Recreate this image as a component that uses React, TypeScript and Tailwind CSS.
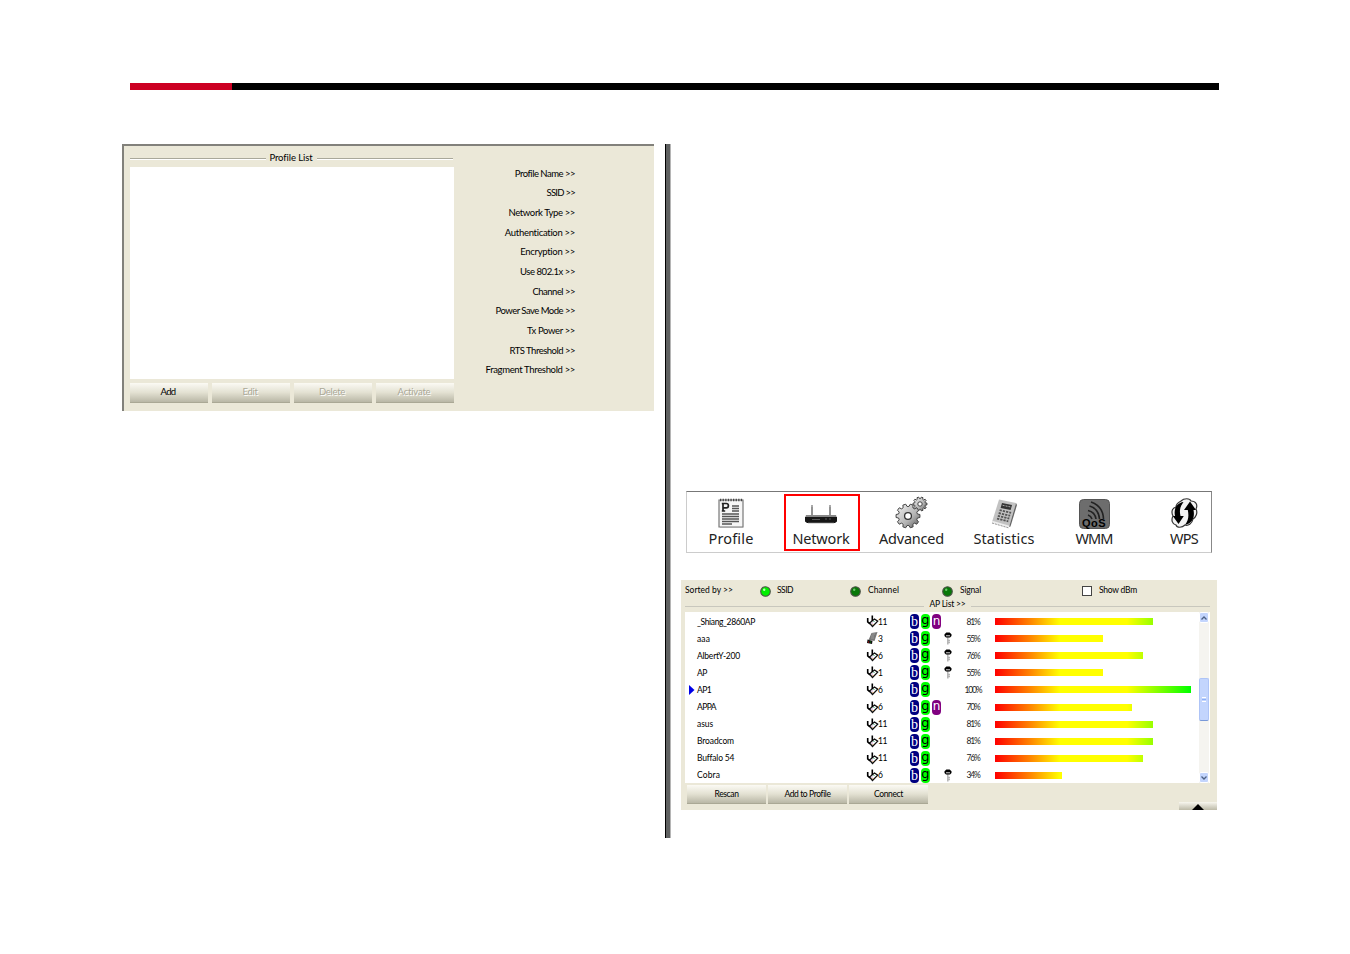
import { useLayoutEffect, useRef } from 'react';
import type { ReactNode } from 'react';

type LabelProps = { text: string; width: number; className?: string };

// Spaces the letters so that the text takes up the given width.
function Label({ text, width, className = '' }: LabelProps) {
  const ref = useRef<HTMLSpanElement>(null);
  useLayoutEffect(() => {
    const el = ref.current;
    if (!el) return;
    el.style.letterSpacing = '0px';
    const natural = el.getBoundingClientRect().width;
    const gap = (width - natural) / text.length;
    el.style.letterSpacing = `${gap}px`;
  }, [text, width]);
  return (
    <span ref={ref} className={`inline-block shrink-0 whitespace-pre ${className}`}>
      {text}
    </span>
  );
}

const fields: [string, number][] = [
  ['Profile Name >>', 60],
  ['SSID >>', 28.5],
  ['Network Type >>', 66.5],
  ['Authentication >>', 70.5],
  ['Encryption >>', 55],
  ['Use 802.1x >>', 55],
  ['Channel >>', 42.5],
  ['Power Save Mode >>', 79.5],
  ['Tx Power >>', 48],
  ['RTS Threshold >>', 65.5],
  ['Fragment Threshold >>', 89.5],
];

type AP = {
  name: string;
  w: number;
  ch: string;
  n?: boolean;
  key?: boolean;
  card?: boolean;
  active?: boolean;
  pct: string;
  bar: number;
};

const aps: AP[] = [
  { name: '_Shiang_2860AP', w: 58, ch: '11', n: true, pct: '81%', bar: 158 },
  { name: 'aaa', w: 13, ch: '3', key: true, card: true, pct: '55%', bar: 107.5 },
  { name: 'AlbertY-200', w: 43, ch: '6', key: true, pct: '76%', bar: 148 },
  { name: 'AP', w: 10, ch: '1', key: true, pct: '55%', bar: 107.5 },
  { name: 'AP1', w: 14, ch: '6', active: true, pct: '100%', bar: 195.5 },
  { name: 'APPA', w: 19, ch: '6', n: true, pct: '70%', bar: 137 },
  { name: 'asus', w: 16, ch: '11', pct: '81%', bar: 158 },
  { name: 'Broadcom', w: 37, ch: '11', pct: '81%', bar: 158 },
  { name: 'Buffalo 54', w: 37, ch: '11', pct: '76%', bar: 148 },
  { name: 'Cobra', w: 23, ch: '6', key: true, pct: '34%', bar: 66.5 },
];

function Button({ text, width, disabled = false, small = false }: { text: string; width: number; disabled?: boolean; small?: boolean }) {
  return (
    <button
      className={`flex items-center justify-center border-b border-[#aaa895] bg-linear-to-b from-[#fbfaf4] via-[#e3e1d2] to-[#b9b7a6] ${small ? 'h-[19px] w-[79px] text-[8.5px]' : 'h-5 w-[78px] pr-[2px] text-[9.5px]'} ${disabled ? 'text-[#aaa897] [text-shadow:1px_1px_0_#ffffff]' : 'text-black'}`}
    >
      <Label text={text} width={width} />
    </button>
  );
}

function Rule({ className = '' }: { className?: string }) {
  return <div className={`h-[2px] border-t border-[#a9a89a] bg-white ${className}`} />;
}

function Antenna({ card }: { card?: boolean }) {
  if (card) {
    return (
      <svg width="13" height="13" viewBox="0 0 13 13">
        <path d="M5.500 1 11.500 0 8.500 9 2.500 8Z" fill="#777" />
        <path d="M6 2h3M5 4h3M5 6h3" stroke="#aaa" strokeWidth=".7" />
        <path d="m1.500 7.500 5 1.500-.5 3-5-1Z" fill="#111" />
        <path d="M2 10h1" stroke="#c00" />
        <path d="M4 10h1" stroke="#080" />
      </svg>
    );
  }
  return (
    <svg width="13" height="13" viewBox="0 0 13 13" fill="none">
      <path d="M3.500 8 8.500 4l3.200 2.200L6.500 11.500Z" fill="#fff" stroke="#111" strokeWidth="1.3" />
      <path d="M1.700 3v3.800l2.300 2M6.300.5v5.500" stroke="#000" strokeWidth="1.6" />
      <path d="M5.500 8h1" stroke="#a5a" />
      <path d="M7.500 6.500h1" stroke="#3a7" />
      <path d="M6.500 9.500h1" stroke="#c84" />
    </svg>
  );
}

function Key() {
  return (
    <svg width="8" height="13" viewBox="0 0 8 13">
      <path d="M3.800 5v7.500M4 8.500h2M4 10.500h2" stroke="#b4b4b4" strokeWidth="1.5" />
      <path d="M2.300.5h3.400L7.500 2.300V4L6 5.500H2L.5 4V2.300Z" fill="#000" />
      <path d="M2 3.800h4" stroke="#ddd" strokeWidth="1" />
    </svg>
  );
}

function Mode({ c, className }: { c: string; className: string }) {
  return (
    <span className={`flex h-[15px] w-[9px] items-center justify-center rounded-[4px] ${className}`}>
      {c}
    </span>
  );
}

function Led({ on = false }: { on?: boolean }) {
  return (
    <svg width="11" height="11" viewBox="0 0 11 11">
      <circle cx="5.5" cy="5.5" r="4.8" fill={on ? '#00f000' : '#087808'} stroke="#4c5148" strokeWidth="1.1" />
      <circle cx="4.2" cy="3.7" r="1.2" fill={on ? '#b8ffb0' : '#6bc46b'} />
    </svg>
  );
}

function ProfileIcon() {
  return (
    <svg width="28" height="31" viewBox="0 0 28 31">
      <path d="M2 2h24v27H2Z" fill="#f6f6f6" stroke="#777" strokeWidth="1.2" />
      <path d="M3 2h23" stroke="#444" strokeWidth="2.4" strokeDasharray="1.3 1.3" />
      <path d="M6 13V5.5h3.2a2.2 2.2 0 0 1 0 4.4H6M4.8 13h3.4M4.8 5.5H7" stroke="#222" strokeWidth="1.7" fill="none" />
      <path d="M15 8h7M15 10.500h7M15 13h7M5 16h17M5 18.500h17M5 21h17M5 23.500h17M5 26h10" stroke="#555" strokeWidth="1.4" />
      <path d="M3 29.5h23" stroke="#aaa" />
    </svg>
  );
}

function RouterIcon() {
  return (
    <svg width="34" height="20" viewBox="0 0 34 20">
      <path d="M8 2v10M26 2v10" stroke="#888" strokeWidth="1.8" />
      <path d="M7 2h2M25 2h2" stroke="#aaa" strokeWidth="2" />
      <path d="M2 11h30l1 3H1Z" fill="#888" />
      <path d="M1 13h32v4.5l-2 1.5H3l-2-1.5Z" fill="#161616" />
      <path d="M8 15.5h8M21 15h2M25 15h2" stroke="#555" />
      <path d="M4 19.2h26" stroke="#bbb" strokeWidth=".8" />
    </svg>
  );
}

function gearPath(cx: number, cy: number, r: number, inner: number, teeth: number) {
  const pts: string[] = [];
  for (let i = 0; i < teeth; i++) {
    [[-0.34, inner], [-0.2, r], [0.2, r], [0.34, inner]].forEach(([o, rad]) => {
      const a = ((i + o) / teeth) * Math.PI * 2;
      pts.push(`${(cx + Math.cos(a) * rad).toFixed(2)} ${(cy + Math.sin(a) * rad).toFixed(2)}`);
    });
  }
  return `M${pts.join('L')}Z`;
}

function GearsIcon() {
  return (
    <svg width="33" height="33" viewBox="0 0 33 33">
      <defs>
        <linearGradient id="metal" x1="0" y1="0" x2="1" y2="1">
          <stop offset="0" stopColor="#f4f4f4" />
          <stop offset=".6" stopColor="#b4b4b4" />
          <stop offset="1" stopColor="#555" />
        </linearGradient>
      </defs>
      <path d={gearPath(25, 8, 7, 5.4, 10)} fill="url(#metal)" stroke="#444" />
      <circle cx="25" cy="8" r="2.2" fill="#fff" stroke="#444" />
      <path d={gearPath(13, 20, 12, 9.6, 10)} fill="url(#metal)" stroke="#444" />
      <circle cx="13" cy="20" r="3.4" fill="#fff" stroke="#333" strokeWidth="1.3" />
    </svg>
  );
}

function CalculatorIcon() {
  return (
    <svg width="28" height="31" viewBox="0 0 28 31">
      <path d="M9 1.5 26 5 19 29 2 24Z" fill="#c2c2c2" />
      <path d="M26 5 19 29l1.5-.5L27 7Z" fill="#666" />
      <path d="m12 5 10 2-1.4 5-10-2Z" fill="#333" />
      <path d="m12.6 7.3 7.8 1.6" stroke="#aaa" strokeDasharray="2 1" />
      <g stroke="#555" strokeWidth="1.8" strokeDasharray="2.3 1">
        <path d="m9.6 12.2 11.5 2.7" />
        <path d="m8.7 15 11.5 2.7" />
        <path d="m7.8 17.8 11.5 2.7" />
        <path d="m7 20.6 11.3 2.7" />
      </g>
      <path d="m2 24 17 5" stroke="#eee" strokeWidth="2.4" />
      <path d="m2 25 17 5" stroke="#999" strokeDasharray="2 1" />
    </svg>
  );
}

function QosIcon() {
  return (
    <span className="relative flex h-[30px] w-[31px]">
      <svg width="31" height="30" viewBox="0 0 31 30" fill="none">
        <rect x=".5" y=".5" width="30" height="29" rx="4" fill="#6d6d6d" stroke="#555" />
        <path d="M9 16q3 1 4 4M9 11.5q7 1.5 8 8.5M10.5 7q9 2.5 10 13M12 3q12 4 12.5 17" stroke="#222" strokeWidth="1.6" />
      </svg>
      <span className="absolute inset-x-0 bottom-0 flex justify-center font-['Liberation_Sans',sans-serif] text-[11px] leading-[11px] font-bold text-black">
        <Label text="QoS" width={24} />
      </span>
    </span>
  );
}

function WpsIcon() {
  return (
    <svg width="29" height="31" viewBox="0 0 29 31" fill="none">
      <path d="M11 3C14 0 20 0 21 3c5 0 7 4 5 8 2 4 0 8-3 10-1 5-5 7-8 6-3 3-8 3-9 0-4-1-5-5-3-9-2-4-1-8 3-9 0-3 3-5 5-6Z" fill="#f3f3f3" stroke="#333" strokeWidth="1.2" />
      <path d="M13.500 4C6.500 5 3.500 11 5 18H2.800l5.700 8 5.300-8h-3.300C9 12 10.500 8 13.500 4Z" fill="#000" />
      <path d="M15 27c7.500-1.500 10-8 8.500-15H26L20 3.500 14 12h3.800C19 18 18.500 22 15 27Z" fill="#000" />
    </svg>
  );
}

function Tool({ icon, text, width, className }: { icon: ReactNode; text: string; width: number; className: string }) {
  return (
    <div className={`flex h-[57px] shrink-0 flex-col items-center ${className}`}>
      <div className="flex h-[35px] items-end justify-center">{icon}</div>
      <div className="flex h-[19px] items-center text-[14.5px] leading-[19px] text-[#222]">
        <Label text={text} width={width} />
      </div>
    </div>
  );
}

function ProfilePanel() {
  return (
    <section className="flex h-[267px] w-[532px] shrink-0 border-t-2 border-l-2 border-[#82817b] bg-[#ebe8d8]">
      <div className="ml-[6px] flex w-[324px] flex-col">
        <div className="flex h-[21px] items-center pt-[3px] text-[9.5px] leading-[18px]">
          <Rule className="mt-px w-[136px]" />
          <div className="flex w-[51px] justify-center pr-px">
            <Label text="Profile List" width={43} />
          </div>
          <Rule className="mt-px w-[136px]" />
        </div>
        <div className="h-[212px] bg-white" />
        <div className="mt-1 flex justify-between">
          <Button text="Add" width={15} />
          <Button text="Edit" width={15} disabled />
          <Button text="Delete" width={26} disabled />
          <Button text="Activate" width={33} disabled />
        </div>
      </div>
      <div className="flex w-[121px] flex-col items-end pt-[18px] text-[9.5px]">
        {fields.map(([text, width]) => (
          <div key={text} className="flex h-[19.65px] shrink-0 items-center leading-[18px]">
            <Label text={text} width={width} />
          </div>
        ))}
      </div>
    </section>
  );
}

function Toolbar() {
  return (
    <nav className="ml-[15px] flex h-[62px] w-[526px] border border-t-[#777] border-r-[#888] border-b-[#ccc] border-l-[#ccc] bg-white pt-[2px] font-['Noto_Sans',sans-serif]">
      <Tool icon={<ProfileIcon />} text="Profile" width={45} className="ml-[20px] w-[48px]" />
      <Tool icon={<RouterIcon />} text="Network" width={57} className="ml-[29px] w-[76px] border-2 border-[#ff0000] pr-[2px] *:first:h-[28px] *:last:mt-[5px]" />
      <Tool icon={<GearsIcon />} text="Advanced" width={65} className="ml-[18px] w-[67px]" />
      <Tool icon={<CalculatorIcon />} text="Statistics" width={61} className="ml-[26px] w-[66px]" />
      <Tool icon={<QosIcon />} text="WMM" width={37} className="ml-[36px] w-[42px]" />
      <Tool icon={<WpsIcon />} text="WPS" width={28} className="ml-[53px] w-[32px]" />
    </nav>
  );
}

function ScrollBar() {
  return (
    <div className="flex w-[10px] shrink-0 flex-col bg-[#f5f4f0]">
      <div className="flex h-[11px] items-center justify-center rounded-[2px] border border-white bg-[#c3d5fd]">
        <svg width="6" height="4" viewBox="0 0 6 4"><path d="m.5 3.500 2.500-2.500 2.500 2.500" stroke="#4d6185" strokeWidth="1.300" fill="none" /></svg>
      </div>
      <div className="mt-[55px] flex h-[43px] flex-col items-center justify-center gap-px rounded-[2px] border border-b-[#7898d8] border-[#aec4f7] bg-[#c3d5fd]">
        <i className="h-px w-1 bg-white" /><i className="h-px w-1 bg-[#8cb0f8]" /><i className="h-px w-1 bg-white" />
      </div>
      <div className="mt-auto flex h-[11px] items-center justify-center rounded-[2px] border border-white bg-[#c3d5fd]">
        <svg width="6" height="4" viewBox="0 0 6 4"><path d="m.5.5 2.500 2.500L5.500.5" stroke="#4d6185" strokeWidth="1.300" fill="none" /></svg>
      </div>
    </div>
  );
}

function Row({ ap }: { ap: AP }) {
  return (
    <div className="flex h-[17.1px] shrink-0 items-center leading-[16px]">
      <div className="flex w-3 shrink-0 pl-1">
        {ap.active && <svg width="6" height="10" viewBox="0 0 6 10"><path d="M0 0 5.500 5 0 10Z" fill="#0000e8" /></svg>}
      </div>
      <div className="w-[169px] shrink-0"><Label text={ap.name} width={ap.w} /></div>
      <div className="w-[11px] shrink-0"><Antenna card={ap.card} /></div>
      <div className="w-[33px] shrink-0 pl-px"><Label text={ap.ch} width={ap.ch.length === 2 ? 9 : 4.5} /></div>
      <div className="flex w-[34px] shrink-0 gap-[2px]">
        <Mode c="b" className="bg-[#000080] font-['Liberation_Serif',serif] text-[14px] leading-[15px] text-white" />
        <Mode c="g" className="bg-[#00ff00] pb-[3px] font-['DejaVu_Sans',sans-serif] text-[13px] leading-[12px] text-black" />
        {ap.n && <Mode c="n" className="bg-[#800080] pb-px font-['DejaVu_Sans',sans-serif] text-[12px] leading-[13px] text-white" />}
      </div>
      <div className="w-2 shrink-0">{ap.key && <Key />}</div>
      <div className="flex w-[43px] shrink-0 justify-center pr-px text-[#222]"><Label text={ap.pct} width={ap.pct.length === 4 ? 17 : 13} /></div>
      <div
        className="h-[7px] shrink-0 bg-[linear-gradient(90deg,#ff0000_0px,#ff8000_34px,#ffff00_65px,#ffff00_132px,#00ff00_196px)]"
        style={{ width: ap.bar }}
      />
    </div>
  );
}

function NetworkPanel() {
  return (
    <section className="mt-[27px] ml-[10px] flex h-[230px] w-[536px] flex-col bg-[#ebe8d8] text-[8.5px]">
      <div className="flex h-[20px] items-center pl-[4px] leading-[18px]">
        <div className="w-[75px]"><Label text="Sorted by >>" width={48} /></div>
        <div className="mt-[2px] w-[17px]"><Led on /></div>
        <div className="w-[73px]"><Label text="SSID" width={16} /></div>
        <div className="mt-[2px] w-[18px]"><Led /></div>
        <div className="w-[74px]"><Label text="Channel" width={31} /></div>
        <div className="mt-[2px] w-[18px]"><Led /></div>
        <div className="w-[122px]"><Label text="Signal" width={21} /></div>
        <div className="mt-[2px] size-[10px] border border-[#444] bg-white" />
        <div className="ml-[7px]"><Label text="Show dBm" width={38} /></div>
      </div>
      <div className="flex h-[12px] items-center pl-1 leading-[10px]">
        <div className="h-px w-[239px] bg-[#c8c7bd]" />
        <div className="mb-1 flex w-[47px] justify-center"><Label text="AP List >>" width={36} /></div>
        <div className="h-px w-[239px] bg-[#c8c7bd]" />
      </div>
      <div className="ml-1 flex h-[171px] w-[525px] bg-white">
        <div className="flex w-[514px] shrink-0 flex-col overflow-hidden pt-px">
          {aps.map((ap) => <Row key={ap.name} ap={ap} />)}
        </div>
        <ScrollBar />
      </div>
      <div className="flex h-[27px] pl-[6px]">
        <div className="mt-[2px] flex gap-[2px]">
          <Button text="Rescan" width={24} small />
          <Button text="Add to Profile" width={46} small />
          <Button text="Connect" width={29} small />
        </div>
        <div className="mt-auto ml-auto flex h-[8px] w-[38px] items-end justify-center bg-linear-to-b from-[#f8f7ef] to-[#bdbaa8]">
          <svg width="12" height="6" viewBox="0 0 12 6"><path d="M0 6 6 0l6 6Z" fill="#000" /></svg>
        </div>
      </div>
    </section>
  );
}

export default function App() {
  return (
    <main className="flex h-[954px] w-[1350px] flex-col overflow-hidden bg-white font-[Lato,'Noto_Sans',sans-serif] text-black">
      <div className="mt-[83px] ml-[130px] flex h-[7px] w-[1089px] bg-black">
        <div className="w-[102px] bg-[#cc0022]" />
      </div>
      <div className="mt-[54px] ml-[122px] flex">
        <ProfilePanel />
        <div className="ml-[11px] h-[694px] w-[6px] shrink-0 border-r border-l border-r-[#b5b5b5] border-l-black bg-[#5f6161]" />
        <div className="flex flex-col pt-[347px] pl-0">
          <Toolbar />
          <NetworkPanel />
        </div>
      </div>
    </main>
  );
}
